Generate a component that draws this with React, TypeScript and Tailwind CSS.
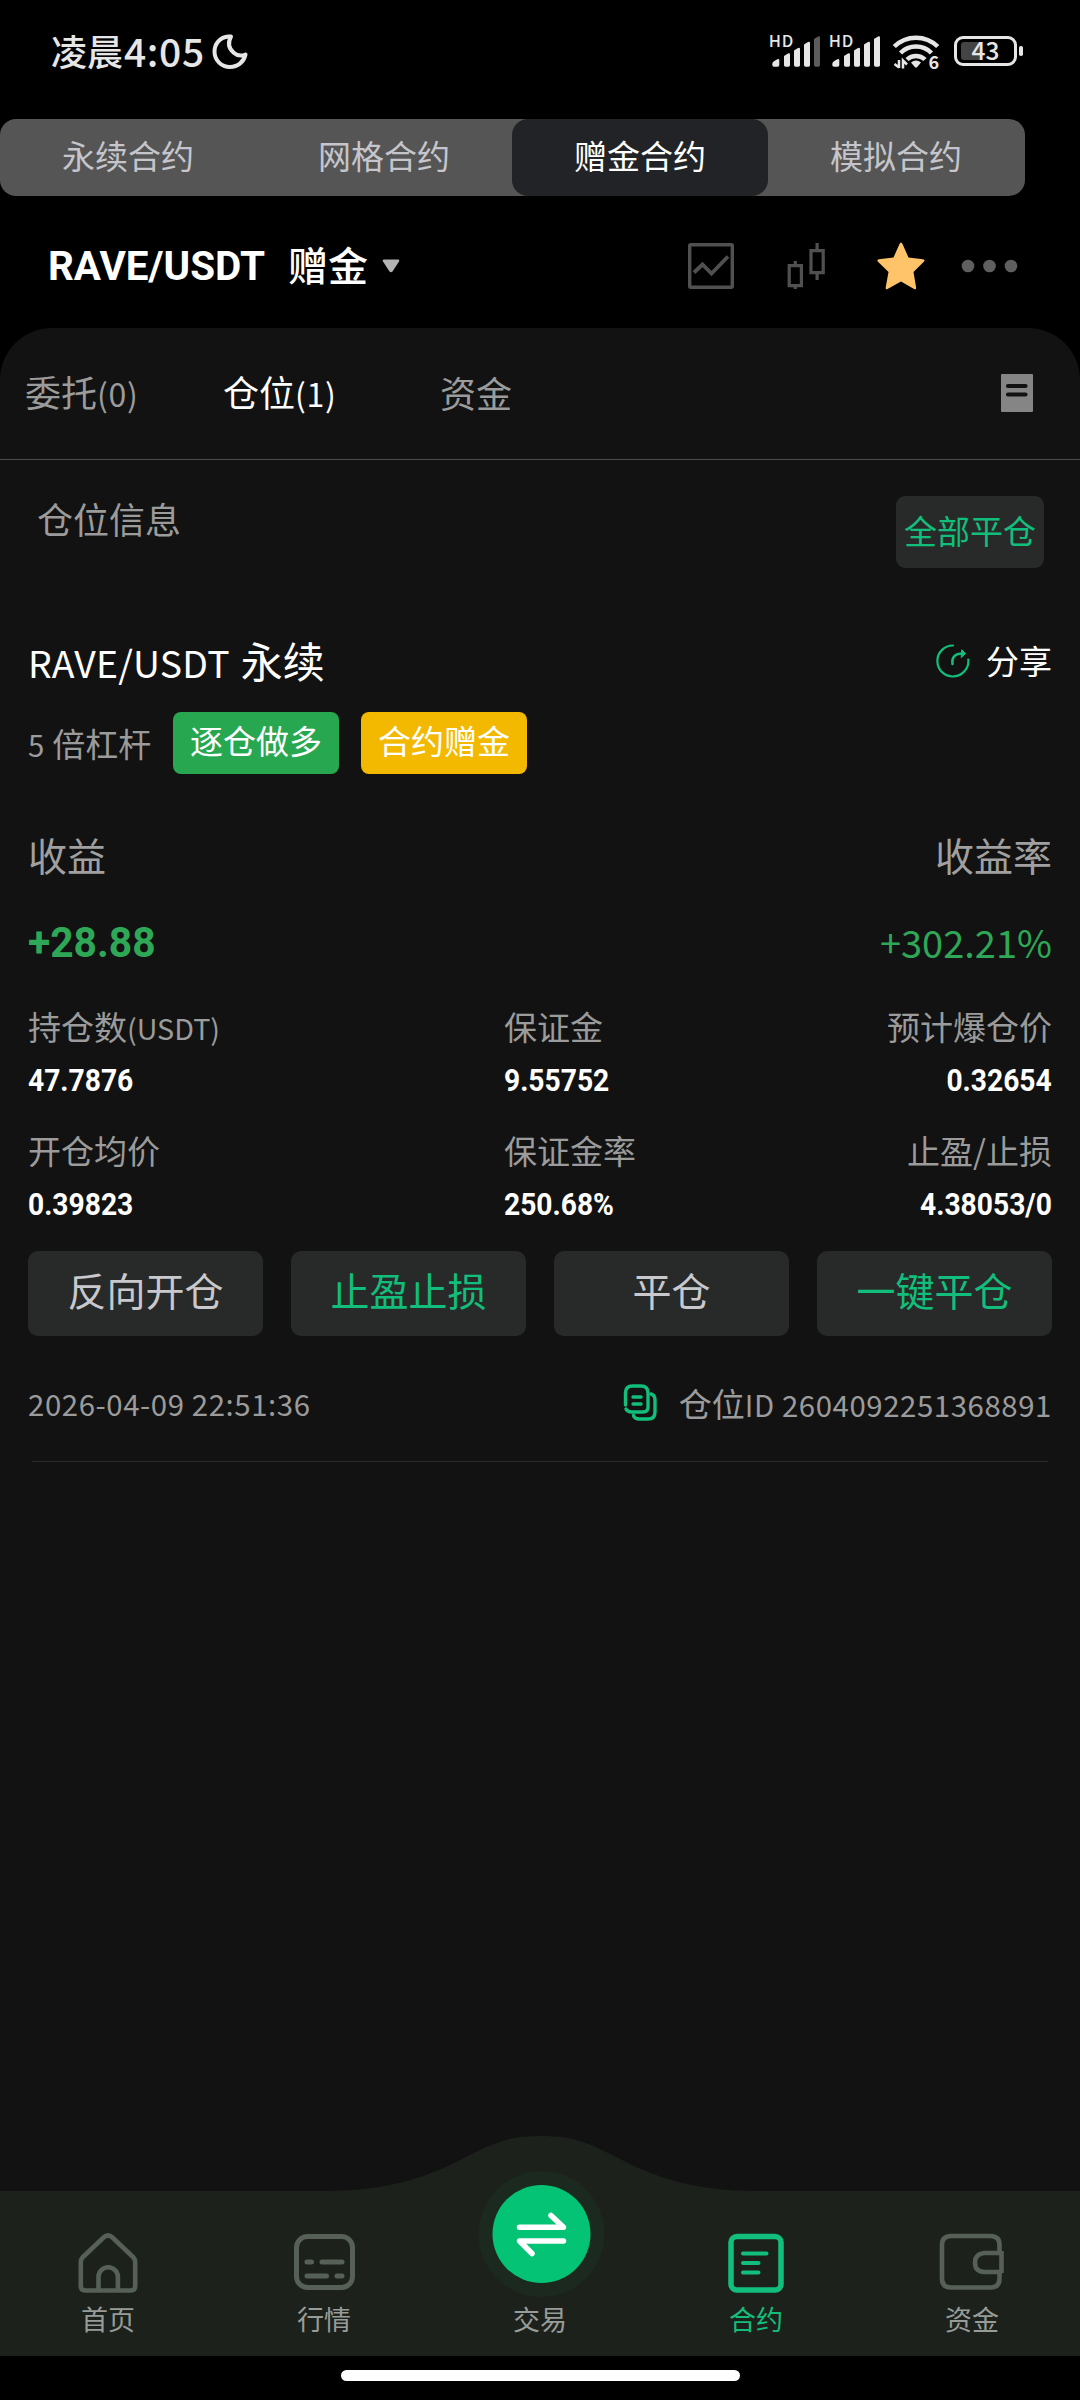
import React from "react";
import clsx from "clsx";

const GREEN = "#12be7b";

const contractTabs = ["永续合约", "网格合约", "赠金合约", "模拟合约"];

const stats = [
  { label: "持仓数", unit: "(USDT)", value: "47.7876" },
  { label: "保证金", value: "9.55752" },
  { label: "预计爆仓价", value: "0.32654" },
  { label: "开仓均价", value: "0.39823" },
  { label: "保证金率", value: "250.68%" },
  { label: "止盈/止损", value: "4.38053/0" },
];

const actions = [
  { label: "反向开仓", green: false },
  { label: "止盈止损", green: true },
  { label: "平仓", green: false },
  { label: "一键平仓", green: true },
];

// Latin letters and digits sit a bit smaller than the Chinese around them
const Latin: React.FC<{ children: React.ReactNode; className?: string }> = ({
  children,
  className,
}) => (
  <span className={className || "text-[0.89em] tracking-[0.020em]"}>{children}</span>
);

const SignalBars: React.FC<{ x: number; dimLast?: boolean }> = ({ x, dimLast }) => (
  <g transform={`translate(${x} 0)`} fill="#e6e6e6">
    <text x="0.500" y="47.300" fontSize="16.500" fontWeight="500" letterSpacing="0.600">
      HD
    </text>
    <path d="M4 64q0-2 2-3l3-1.700q2-.8 2 1V65q0 1.700-1.700 1.700H5.700Q4 66.700 4 65z" />
    <path d="M15.700 56l4-2.500q2-.8 2 1V65q0 1.700-1.500 1.700h-3q-1.500 0-1.500-1.700z" />
    <path d="M25.700 50.500l4-2.500q2-.8 2 1V65q0 1.700-1.500 1.700h-3q-1.500 0-1.500-1.700z" />
    <path d="M35.700 44.500l4-2.500q2-.8 2 1V65q0 1.700-1.500 1.700h-3q-1.500 0-1.500-1.700z" />
    <path
      d="M45.700 39l4-2.500q2-.8 2 1V65q0 1.700-1.500 1.700h-3q-1.500 0-1.500-1.700z"
      fill={dimLast ? "#5c5c5c" : "#e6e6e6"}
    />
  </g>
);

const StatusBar = () => (
  <header className="flex h-[119px] items-start pt-[20px] pl-[51px] pr-[54px]">
    <div className="mt-[5px] flex h-[54px] items-center text-[36px] font-medium leading-none text-[#e6e6e6]">
      <span className="-mt-[4px]">凌晨</span>
      <span className="-mt-[4px] ml-px text-[39px] tracking-[0.600px]">4:05</span>
      <svg className="ml-[6px]" width="38" height="38" viewBox="0 0 38 38" fill="none">
        <path
          d="M17.500 3.500C9 4 3.500 11 3.500 18.500c0 9 7 15.500 15.500 15.500 8 0 14-5.500 15.500-12.500-3.500 1.500-8 1.500-11.500-1.500-5.500-4.500-6.500-10-3-16.500z"
          stroke="#e6e6e6"
          strokeWidth="4"
          strokeLinejoin="round"
        />
      </svg>
    </div>
    <svg className="ml-auto" width="258" height="64" viewBox="768 20 258 64">
      <SignalBars x={768.3} dimLast />
      <SignalBars x={828.3} />
      <g fill="none" stroke="#e6e6e6" strokeWidth="4.500">
        <path d="M894.300 46.500a31 31 0 0 1 43.400 0" />
        <path d="M900.500 53a22 22 0 0 1 31 0" />
        <path d="M907 59.500a13 13 0 0 1 18 0" />
      </g>
      <path d="M911 62.500q5-4 10 0l-4 4.700q-1 .9-2 0z" fill="#e6e6e6" />
      <path d="M899 60v8M894.500 64l4.500 3.500M903 68.500v-8l4 4" fill="none" stroke="#e6e6e6" strokeWidth="2.500" />
      <text x="928.500" y="69" fontSize="18" fontWeight="700" fill="#e6e6e6">
        6
      </text>
      <rect x="955.500" y="37.500" width="60" height="27" rx="7.500" fill="none" stroke="#e6e6e6" strokeWidth="3" />
      <path d="M964 42h18v18h-18q-3 0-3-3V45q0-3 3-3z" fill="#444" />
      <rect x="1019" y="46" width="4" height="10" rx="1.800" fill="#e6e6e6" />
      <text x="985.500" y="60" textAnchor="middle" fontSize="24.500" fontWeight="500" fill="#e6e6e6">
        43
      </text>
    </svg>
  </header>
);

const PairHeader = () => (
  <div className="flex h-[132px] items-center pl-[48px] pr-[61px] pt-[8px]">
    <div className="w-[240px] pt-px">
      <span className="inline-block origin-left scale-x-[0.985] font-['Roboto',sans-serif] text-[41px] font-bold leading-none text-white">
        RAVE/USDT
      </span>
    </div>
    <span className="-mt-[4px] text-[40px] font-medium leading-none text-white">赠金</span>
    <svg className="ml-[14px]" width="18" height="14" viewBox="0 0 18 14">
      <path d="M2 .5h14q2 0 1 2l-6.500 10q-1.500 1.500-3 0L1 2.500q-1-2 1-2z" fill="#b3b3b3" />
    </svg>
    <div className="ml-auto flex items-center">
      <svg width="46" height="46" viewBox="0 0 46 46" fill="none" stroke="#505050" strokeWidth="3.400">
        <rect x="1.700" y="1.700" width="42.600" height="42.600" rx="1" />
        <path d="M6 29.500l8.500-8 9 9L40 13.500" strokeWidth="3.800" />
      </svg>
      <svg className="ml-[53px]" width="38" height="46" viewBox="0 0 38 46" fill="none" stroke="#505050" strokeWidth="3.200">
        <path d="M2.200 22.600h12.200v20H2.200zM8.300 18v4M8.300 43v3.500" />
        <path d="M24 7.600h12.200v22H24zM30.100 0v7M30.100 30v7" />
      </svg>
      <svg className="ml-[52px]" width="48" height="48" viewBox="0 0 48 48">
        <path
          d="M22.500 2q1.500-3 3 0l6 13.500 14.500 1.700q2.500.6.8 2.600L36.500 30l2.600 15.500q.2 2.500-2 1.400L24 39.500l-13.500 7.400q-2 1-1.800-1.400L11.500 30 1 19.800q-1.500-2 .8-2.600l14.700-1.700z"
          fill="#ffc469"
        />
      </svg>
      <svg className="ml-[36px]" width="58" height="14" viewBox="0 0 58 14" fill="#5f5f5f">
        <circle cx="7" cy="7" r="6.300" />
        <circle cx="28.500" cy="7" r="6.300" />
        <circle cx="50" cy="7" r="6.300" />
      </svg>
    </div>
  </div>
);

const ShareIcon = () => (
  <svg width="34" height="34" viewBox="0 0 34 34" fill="none" stroke={GREEN} strokeWidth="2.200" strokeLinecap="round">
    <path d="M17 1.500a15.500 15.500 0 1 0 15.300 14" />
    <path d="M16.500 20c-1-7 3-11 11-10.500" strokeWidth="2.600" />
    <path d="M26 6l3.500 3.500-4 4z" fill={GREEN} strokeWidth="1" />
  </svg>
);

const CopyIcon = () => (
  <svg width="34" height="38" viewBox="0 0 34 38" fill="none" stroke={GREEN} strokeWidth="3.400" strokeLinecap="round">
    <path d="M2.500 21V9q0-7 7-7h8.500q7 0 7 7v14q0 5-5 5H9q-4.500 0-6-3" />
    <path d="M28 10q4 1 4 6v12q0 7-7 7h-8.500q-5 0-6-3.500" />
    <path d="M10 13h8M10 20h8" />
  </svg>
);

const Position = () => (
  <section className="px-[28px]">
    <div className="flex h-[60px] items-center text-white">
      <h2 className="text-[42px] leading-[60px]">
        <Latin className="text-[0.89em] tracking-[0.006em]">RAVE/USDT</Latin>
        <span className="ml-[11px]">永续</span>
      </h2>
      <div className="ml-auto flex items-center">
        <ShareIcon />
        <span className="-mt-[2px] ml-[16px] text-[33px] leading-none">分享</span>
      </div>
    </div>

    <div className="mt-[21px] flex h-[62px] items-center text-[33px] leading-[56px] text-white">
      <span className="w-[145px] whitespace-nowrap text-[#9b9b9b]">
        <Latin>5</Latin> 倍杠杆
      </span>
      <span className="h-[62px] w-[166px] rounded-lg bg-[#27a74f] text-center">逐仓做多</span>
      <span className="ml-[22px] h-[62px] w-[166px] rounded-lg bg-[#f3b900] text-center">合约赠金</span>
    </div>

    <div className="mt-[49px] flex h-[62px] items-center justify-between text-[39px] text-[#a0a0a0]">
      <span>收益</span>
      <span>收益率</span>
    </div>
    <div className="mt-[27px] flex h-[60px] items-center justify-between text-[#2ea756]">
      <span className="inline-block origin-left scale-x-[0.97] font-['Roboto',sans-serif] text-[42px] font-bold">
        +28.88
      </span>
      <Latin className="text-[38px] leading-[58px]">+302.21%</Latin>
    </div>

    <div className="mt-[27px] grid grid-cols-[476px_1fr_1fr] gap-y-[24px]">
      {stats.map((s, i) => {
        const last = i % 3 === 2;
        return (
          <div key={s.label} className={clsx("h-[100px]", last && "text-right")}>
            <div className="h-[59px] whitespace-nowrap text-[33px] leading-[54px] text-[#9b9b9b]">
              {s.label}
              {s.unit && <Latin className="text-[0.87em]">{s.unit}</Latin>}
            </div>
            <span
              className={clsx(
                "inline-block scale-x-[0.91] font-['Roboto',sans-serif] text-[31px] font-bold leading-[46px] text-white",
                last ? "origin-right" : "origin-left",
              )}
            >
              {s.value}
            </span>
          </div>
        );
      })}
    </div>

    <div className="mt-[28px] grid h-[85px] grid-cols-4 gap-[28px]">
      {actions.map((a) => (
        <button
          key={a.label}
          className={clsx(
            "rounded-[10px] bg-[#282929] pb-[8px] text-[39px] leading-none",
            a.green ? "text-[#12be7b]" : "text-[#c9c9cd]",
          )}
        >
          {a.label}
        </button>
      ))}
    </div>

    <div className="mt-[37px] flex h-[60px] items-center text-[33px] leading-[60px] text-[#9b9b9b]">
      <Latin>2026-04-09 22:51:36</Latin>
      <div className="ml-auto flex items-center gap-[22px]">
        <CopyIcon />
        <span>
          仓位<Latin>ID 2604092251368891</Latin>
        </span>
      </div>
    </div>
    <div className="mx-[4px] mt-[28px] h-px bg-[#2b2b2b]" />
  </section>
);

const navItems = [
  {
    label: "首页",
    icon: (
      <g stroke="#566056" strokeWidth="4.600" strokeLinejoin="round">
        <path d="M25.500 4.500q4.500-4 9 0l21 20q1.700 2 1.700 4.500v24q0 4.500-4.500 4.500H7.300q-4.500 0-4.500-4.500V29q0-2.500 1.700-4.500z" />
        <path d="M20.500 57V44a9.700 9.700 0 0 1 19.400 0v13" />
      </g>
    ),
  },
  {
    label: "行情",
    icon: (
      <g stroke="#566056" strokeWidth="5" strokeLinecap="round">
        <rect x="2.500" y="3.500" width="56" height="51" rx="11" />
        <path d="M13 29h4.500M28 29h20M13 43h19.500M43 43h5" />
      </g>
    ),
  },
  { label: "交易", icon: null },
  {
    label: "合约",
    active: true,
    icon: (
      <g stroke={GREEN} strokeLinecap="round">
        <rect x="5" y="3.500" width="50" height="53.500" rx="6" strokeWidth="5.500" />
        <path d="M17 20.500h23.500M17 30h15.500M17 39.500h15.500" strokeWidth="4" />
      </g>
    ),
  },
  {
    label: "资金",
    icon: (
      <g stroke="#566056" strokeWidth="4.600">
        <path d="M57.500 18V12q0-9-9-9H9q-9 0-9 9v33.500q0 9 9 9h39.500q9 0 9-9V40" />
        <path d="M59.500 18v22M60 20H42q-9 1-9 9.500 0 9 9 9.500h18" />
      </g>
    ),
  },
];

const BottomNav = () => (
  <nav className="relative flex h-[165px]">
    <svg className="absolute bottom-0 left-0" width="1080" height="220" viewBox="0 0 1080 220">
      <path
        d="M0 55H325C385 55 425 42 458 25S505 0 541 0 591 8 624 25 697 55 757 55H1080V220H0Z"
        fill="#1c211c"
      />
      <circle cx="541.500" cy="98" r="63" fill="#1b291e" />
      <circle cx="541.500" cy="98" r="49" fill="#05c375" />
      <path
        d="M519.500 91.300H563.500L551 79.500M563.500 105H519.500L532 117.500"
        fill="none"
        stroke="#fff"
        strokeWidth="5.500"
        strokeLinecap="round"
        strokeLinejoin="round"
      />
    </svg>
    {navItems.map((item) => (
      <div key={item.label} className="relative flex w-[216px] flex-col items-center pt-[42px]">
        <svg className="-ml-px overflow-visible" width="60" height="60" viewBox="0 0 60 60" fill="none">
          {item.icon}
        </svg>
        <span
          className={clsx(
            "mt-[8px] text-[27px] leading-[36px]",
            item.active ? "text-[#12be7b]" : "text-[#989c98]",
          )}
        >
          {item.label}
        </span>
      </div>
    ))}
  </nav>
);

export default function App() {
  return (
    <div className="flex h-[2400px] w-[1080px] flex-col overflow-hidden bg-black font-['Noto_Sans_CJK_SC',sans-serif]">
      <StatusBar />
      <div className="flex h-[77px] w-[1025px] rounded-2xl bg-[#555] pr-px">
        {contractTabs.map((tab) => (
          <div
            key={tab}
            className={clsx(
              "flex-1 rounded-2xl text-center text-[33px] leading-[72px]",
              tab === "赠金合约" ? "bg-[#222326] text-white" : "text-[#c5c5cb]",
            )}
          >
            {tab}
          </div>
        ))}
      </div>
      <PairHeader />

      <main className="flex-1 rounded-t-[52px] bg-[#121212]">
        <div className="flex h-[132px] items-center border-b border-[#4d4d4d] pb-[4px] pl-[25px] pr-[47px] text-[36px] leading-none text-[#9b9b9b]">
          <span className="w-[198px]">
            委托<Latin>(0)</Latin>
          </span>
          <span className="w-[217px] text-white">
            仓位<Latin>(1)</Latin>
          </span>
          <span>资金</span>
          <svg className="ml-auto mt-[2px]" width="32" height="38" viewBox="0 0 32 38">
            <rect width="32" height="38" rx="1" fill="#858585" />
            <path d="M7 12h17.500M7 20.500h17.500" stroke="#121212" strokeWidth="4.200" strokeLinecap="round" />
          </svg>
        </div>

        <div className="flex h-[171px] items-start pl-[37px] pr-[36px] pt-[36px]">
          <span className="mt-[4px] text-[36px] leading-[36px] text-[#9b9b9b]">仓位信息</span>
          <button className="ml-auto h-[72px] w-[148px] rounded-[9px] bg-[#282929] pb-[4px] text-[33px] leading-none text-[#12be7b]">
            全部平仓
          </button>
        </div>

        <Position />
      </main>

      <BottomNav />
      <footer className="flex h-[44px] justify-center bg-black pt-[14px]">
        <div className="h-[11px] w-[399px] rounded-full bg-white" />
      </footer>
    </div>
  );
}
